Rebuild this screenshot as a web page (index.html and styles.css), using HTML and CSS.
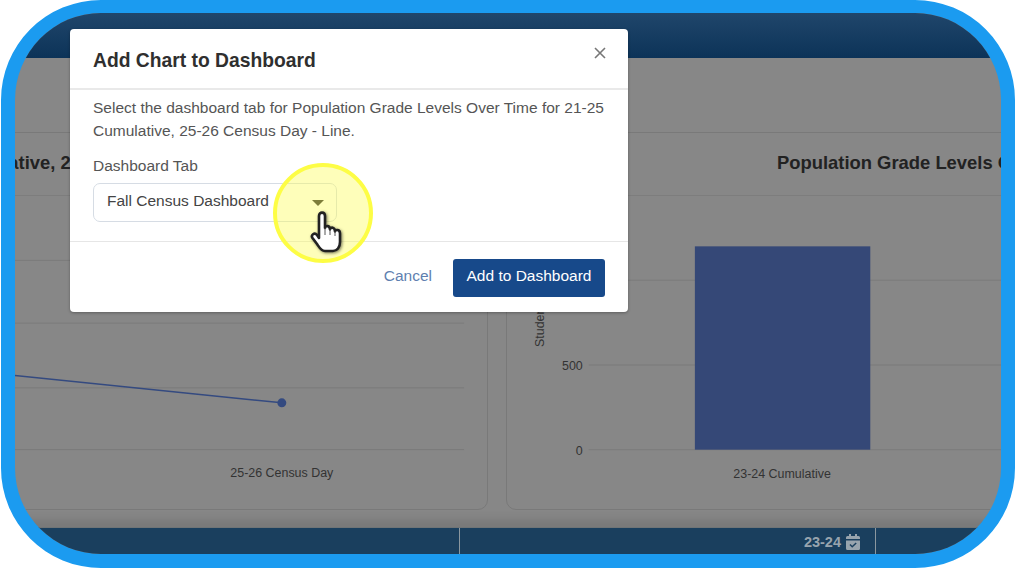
FILE: index.html
```html
<!DOCTYPE html>
<html>
    <head>
        <title>Add Chart to Dashboard</title>
        <link rel="stylesheet" href="styles.css">
    </head>
    <body>
        <div class="frame">
            <div class="topbar"></div>
            <div class="band"></div>
            <div class="cards">
                <section class="card card-left">
                    <h2 class="card-title">Population Grade Levels Over Time for 21-25 Cumulative, 25-26 Census Day - Line</h2>
                    <svg class="chart" viewBox="-12 196 500 314">
                        <g class="grid">
                            <line x1="-12" y1="260" x2="465" y2="260"/>
                            <line x1="-12" y1="323" x2="465" y2="323"/>
                            <line x1="-12" y1="388" x2="465" y2="388"/>
                            <line x1="-12" y1="450" x2="465" y2="450"/>
                        </g>
                        <line class="series" x1="-12" y1="373" x2="282" y2="403"/>
                        <circle class="series-dot" cx="282" cy="403" r="4.5"/>
                        <text class="tick" x="282" y="478" text-anchor="middle">25-26 Census Day</text>
                    </svg>
                </section>
                <section class="card card-right">
                    <h2 class="card-title">Population Grade Levels Over Time</h2>
                    <svg class="chart" viewBox="506 196 600 314">
                        <g class="grid">
                            <line x1="588" y1="280" x2="1106" y2="280"/>
                            <line x1="588" y1="365" x2="1106" y2="365"/>
                            <line x1="588" y1="450" x2="1106" y2="450"/>
                        </g>
                        <rect class="bar" x="694.500" y="246" width="176" height="204"/>
                        <text class="tick" x="582" y="370" text-anchor="end">500</text>
                        <text class="tick" x="582" y="455" text-anchor="end">0</text>
                        <text class="tick" x="782" y="478" text-anchor="middle">23-24 Cumulative</text>
                        <text class="tick" transform="translate(543 347) rotate(-90)">Students</text>
                    </svg>
                </section>
            </div>
            <div class="footer">
                <div class="footer-cell footer-first"></div>
                <div class="footer-cell footer-year">
                    <span>23-24</span>
                    <svg class="calendar" viewBox="0 0 14 16">
                        <path d="M3 0h2v2h4V0h2v2h1.500A1.500 1.500 0 0 1 14 3.500V5H0V3.500A1.500 1.500 0 0 1 1.500 2H3zM0 6.500h14v8a1.500 1.500 0 0 1-1.500 1.500h-11A1.500 1.500 0 0 1 0 14.500z"/>
                        <path class="calendar-check" d="M4 10.500l2.200 2.200L10.200 9"/>
                    </svg>
                </div>
                <div class="footer-cell footer-last"></div>
            </div>

            <div class="modal">
                <div class="modal-header">
                    <h1 class="modal-title">Add Chart to Dashboard</h1>
                    <svg class="modal-close" viewBox="0 0 12 12"><path d="M1 1l10 10M11 1L1 11"/></svg>
                </div>
                <div class="modal-body">
                    <p class="modal-text">Select the dashboard tab for Population Grade Levels Over Time for 21-25 Cumulative, 25-26 Census Day - Line.</p>
                    <label class="field-label">Dashboard Tab</label>
                    <div class="select">
                        <span>Fall Census Dashboard</span>
                        <i class="caret"></i>
                    </div>
                </div>
                <div class="modal-footer">
                    <a class="cancel">Cancel</a>
                    <button class="primary">Add to Dashboard</button>
                </div>
            </div>

            <div class="highlight"></div>
            <svg class="hand" viewBox="0 0 34 44">
                <path d="M9 6C9 1.500 15 1.500 15 6V18C15.500 15 20 15.500 20 19.500C20.500 16.500 25 17 25 21.500C25.500 19 30 19.500 30 23.500V32C30 37.500 27 41 23 41H15C11 41 9 37 7 34L2.500 28C0.500 25 4.500 22 7 25L9 28Z"/>
                <path class="hand-gap" d="M15 18V25M20 19.500V25M25 21.500V26"/>
            </svg>
        </div>
    </body>
</html>
```

FILE: styles.css
```css
html, body {
    margin: 0;
    background: #fff;
}
body {
    font-family: "Liberation Sans", Arial, Helvetica, sans-serif;
    color: #333;
}
.frame {
    position: relative;
    box-sizing: border-box;
    width: 1014px;
    height: 568px;
    margin-left: 1px;
    border: 14px solid #1b9bf0;
    border-top-width: 13px;
    border-radius: 100px;
    background: #878787;
    overflow: hidden;
    display: flex;
    flex-direction: column;
}
.topbar {
    flex: none;
    height: 45px;
    background: linear-gradient(#20466b, #0c3358);
}
.band {
    flex: none;
    height: 74px;
}
.cards {
    flex: none;
    display: flex;
    gap: 18px;
    height: 378px;
    margin-left: -27px;
}
.card {
    flex: none;
    box-sizing: border-box;
    border: 1px solid #797979;
    border-radius: 10px;
    overflow: hidden;
}
.card-left {
    width: 500px;
}
.card-right {
    width: 600px;
}
.card-title {
    box-sizing: border-box;
    height: 63px;
    margin: 0;
    padding-top: 20px;
    font-size: 18.400px;
    line-height: 20px;
    color: #222;
    white-space: nowrap;
    border-bottom: 1px solid #7d7d7d;
}
.card-left .card-title {
    display: flex;
    justify-content: flex-end;
    padding-right: 215px;
}
.card-right .card-title {
    padding-left: 270px;
}
.chart {
    display: block;
    width: 100%;
    height: 314px;
}
.grid line {
    stroke: #7a7a7a;
    stroke-width: 1;
}
.series {
    stroke: #344a80;
    stroke-width: 1.500;
}
.series-dot {
    fill: #344a80;
}
.bar {
    fill: #354877;
}
.tick {
    font-size: 12.500px;
    fill: #333;
}
.footer {
    flex: none;
    display: flex;
    height: 27px;
    margin-top: 17px;
    background: #1a3f5e;
    border-top: 1px solid #6f7476;
    box-shadow: 0 -8px 10px rgba(0, 0, 0, .1);
}
.footer-cell {
    box-sizing: border-box;
}
.footer-first {
    width: 444px;
}
.footer-year {
    width: 417px;
    display: flex;
    align-items: center;
    justify-content: flex-end;
    gap: 5px;
    padding-right: 15px;
    border-left: 1px solid #8b979f;
    border-right: 1px solid #8b979f;
    font-size: 14.500px;
    font-weight: bold;
    color: #98a4ae;
}
.footer-last {
    flex: 1;
}
.calendar {
    width: 14px;
    height: 16px;
    fill: #98a4ae;
}
.calendar-check {
    fill: none;
    stroke: #1a3f5e;
    stroke-width: 1.500;
}
.modal {
    position: absolute;
    left: 55px;
    top: 16px;
    width: 558px;
    background: #fff;
    border-radius: 4px;
    box-shadow: 0 1px 3px rgba(0, 0, 0, .3);
}
.modal-header {
    box-sizing: border-box;
    height: 61px;
    padding: 21px 23px 0;
    border-bottom: 2px solid #e9e9e9;
    position: relative;
}
.modal-title {
    margin: 0;
    font-size: 19.300px;
    line-height: 22px;
    color: #2f2f2f;
}
.modal-close {
    position: absolute;
    right: 22px;
    top: 18px;
    width: 12px;
    height: 12px;
    fill: none;
    stroke: #777;
    stroke-width: 1.600;
}
.modal-body {
    box-sizing: border-box;
    height: 152px;
    padding: 6px 23px 0;
    border-bottom: 1px solid #e6e6e6;
}
.modal-text {
    margin: 0 0 15px;
    font-size: 15.500px;
    line-height: 23px;
    color: #555;
}
.field-label {
    display: block;
    margin-bottom: 8px;
    font-size: 15.500px;
    line-height: 18px;
    color: #555;
}
.select {
    box-sizing: border-box;
    display: flex;
    justify-content: space-between;
    align-items: center;
    width: 244px;
    height: 39px;
    padding: 0 12px 3px 13px;
    border: 1px solid #d6dce4;
    border-radius: 7px;
    font-size: 15.500px;
    color: #444;
}
.caret {
    width: 0;
    height: 0;
    margin-top: 3px;
    border: 6px solid transparent;
    border-top-color: #222;
    border-bottom-width: 0;
}
.modal-footer {
    display: flex;
    justify-content: flex-end;
    align-items: center;
    gap: 21px;
    height: 69px;
    padding: 1px 23px 0;
}
.cancel {
    margin-bottom: 4px;
    font-size: 15.500px;
    color: #5f7fb0;
}
.primary {
    width: 152px;
    height: 38px;
    padding: 0 0 4px;
    border: 0;
    border-radius: 3px;
    background: #17498a;
    color: #fff;
    font: 15.500px "Liberation Sans", Arial, sans-serif;
}
.highlight {
    position: absolute;
    left: 258px;
    top: 150px;
    box-sizing: border-box;
    width: 100px;
    height: 100px;
    border: 4px solid #fdfd45;
    border-radius: 50%;
    background: rgba(252, 252, 90, .42);
}
.hand {
    position: absolute;
    left: 295px;
    top: 197px;
    width: 34px;
    height: 44px;
    fill: #fff;
    stroke: #222;
    stroke-width: 2.600;
    stroke-linejoin: round;
    filter: drop-shadow(1px 1px 1.500px rgba(0, 0, 0, .5));
}
.hand-gap {
    fill: none;
    stroke: #555;
    stroke-width: 1;
}
```
